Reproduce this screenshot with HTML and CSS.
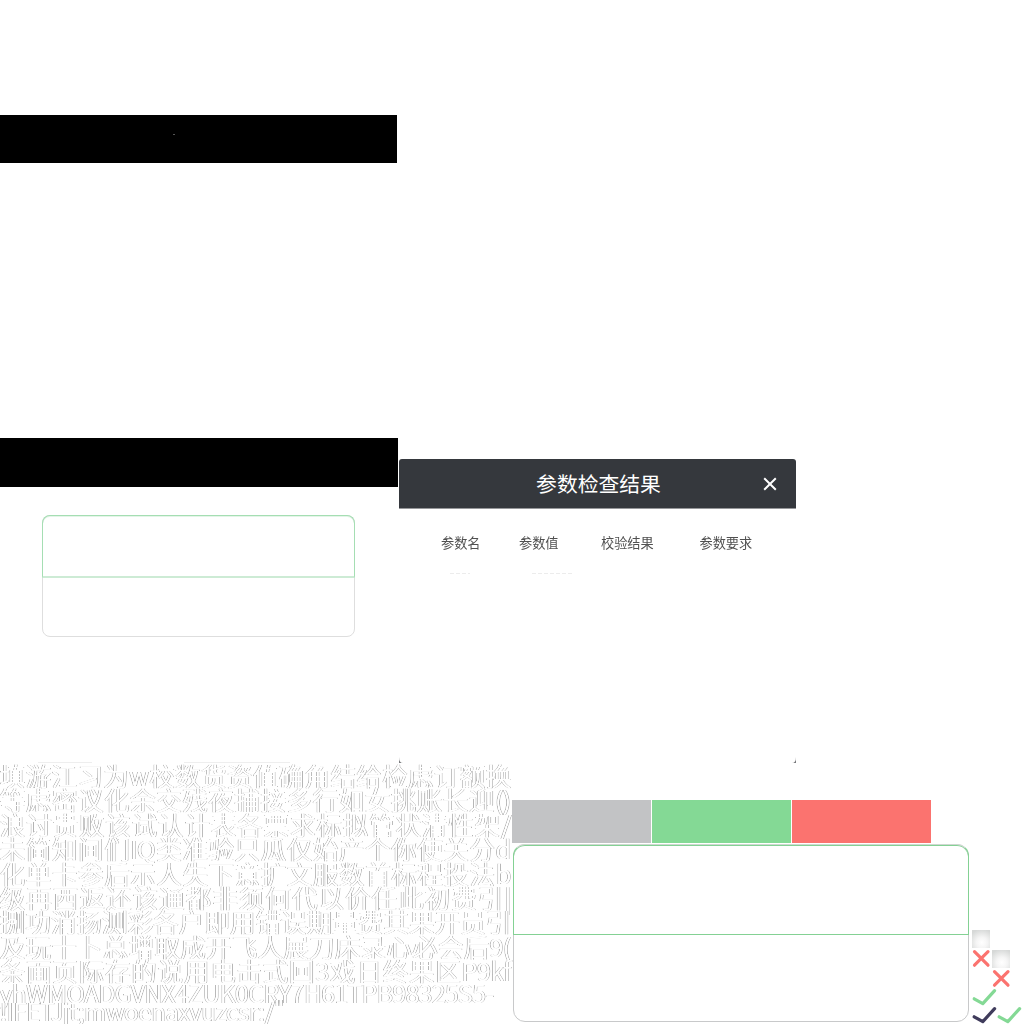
FILE: index.html
```
<!DOCTYPE html>
<html lang="zh-CN">
<head>
<meta charset="utf-8">
<title>参数检查结果</title>
<link rel="stylesheet" href="styles.css">
</head>
<body>
<main class="sheet">
  <section class="upper">
    <div class="left">
      <div class="bar bar-first"><i class="fleck"></i></div>
      <div class="bar bar-second"></div>
      <div class="frame frame-small"><div class="frame-top"></div></div>
      <div class="strips"><i class="strip strip-a"></i><i class="strip strip-b"></i></div>
    </div>
    <div class="dialog">
      <header class="dialog-head">
        <h1>参数检查结果</h1>
        <svg class="close" viewBox="0 0 14 14"><path d="M1.2 1.2 12.8 12.8M12.8 1.2 1.2 12.8"/></svg>
      </header>
      <div class="labels"><span>参数名</span><span>参数值</span><span>校验结果</span><span>参数要求</span></div>
      <div class="dashes"><i class="dash dash-a"></i><i class="dash dash-b"></i></div>
      <div class="corners">
        <svg viewBox="0 0 4 6"><path d="M0 0Q0 6 4 6H0Z"/></svg>
        <svg viewBox="0 0 4 6"><path d="M4 0Q4 6 0 6H4Z"/></svg>
      </div>
    </div>
  </section>
  <section class="lower">
    <div class="glyphs">
      <p>填游江习为w校数货资值确角结给检虑订额换</p>
      <p>等虑密议化余交残夜捕接多行如女挑账长迎()</p>
      <p>浪讨贵败该试认计表各票求标拟管状清性架/</p>
      <p>未简知间们IQ类准验只瓜仅始产个你使关分d</p>
      <p>化单卡参后示人失下意扩文服数首标程投法b</p>
      <p>级再西返还该通都非须何代以价任此初费引|</p>
      <p>捌功消扬测彩各户即用错误期量费其果开员引</p>
      <p>及玩十卜总增取成开飞人展刀床录心必会后9(</p>
      <p>条面页际存的说用电击式回3戏日终果区P9kf</p>
      <p class="latin">yhWMOADGVNX4ZUK0CRY7H61TPB98325S5-</p>
      <p class="latin short">!IFETJjt;mwoenaxvuzcsr:/"</p>
    </div>
    <div class="parts">
      <div class="swatches"><i class="gray"></i><i class="green"></i><i class="red"></i></div>
      <div class="row">
        <div class="frame frame-large"><div class="frame-top"></div></div>
        <svg class="icons" viewBox="0 0 52 94">
          <defs>
            <radialGradient id="shade" cx=".55" cy=".7" r=".75"><stop offset="0" stop-color="#fff"/><stop offset=".4" stop-color="#f5f5f5"/><stop offset="1" stop-color="#d6d8d7"/></radialGradient>
            <path id="cross" d="M2.5 2.5 16 16M16 2.5 2.5 16"/>
            <path id="check" d="M2.2 9.8 10.8 14.6 22.6 1.7"/>
          </defs>
          <rect width="18" height="18" fill="url(#shade)"/>
          <rect x="20" y="20" width="18" height="18" fill="url(#shade)"/>
          <g class="stroke-red"><use href="#cross" y="19.2"/><use href="#cross" x="20" y="39.2"/></g>
          <use class="stroke-green" href="#check" y="59"/>
          <use class="stroke-navy" href="#check" y="77"/>
          <use class="stroke-green" href="#check" x="25" y="77"/>
        </svg>
      </div>
    </div>
  </section>
</main>
</body>
</html>
```
FILE: styles.css
```
* { box-sizing: border-box; }
body { margin: 0; background: #fff; font-family: "Noto Sans CJK SC", sans-serif; }
i { display: block; }
.sheet { width: 1024px; height: 1024px; overflow: hidden; }
.upper { display: flex; gap: 1px; height: 763px; }
.left { width: 398px; padding-top: 115px; }
.bar { background: #000; }
.bar-first { width: 397px; height: 48px; margin-bottom: 275px; padding: 19px 0 0 173px; }
.fleck { width: 2px; height: 1px; background: #555; }
.bar-second { height: 49px; margin-bottom: 28px; }
.frame { border: 1px solid #d8d9da; }
.frame-small { width: 313px; height: 122px; margin-left: 42px; border-radius: 8px; border-color: #dedede; }
.frame-small .frame-top { height: 63px; margin: -1px; border: 1px solid #a5deb3; border-bottom: 2px solid #cdebd5; border-radius: 8px 8px 0 0; box-shadow: inset 0 1px #e4f5e8; }
.strips { display: flex; gap: 92px; padding: 125px 0 0 38px; }
.strip { height: 1px; background: #eee; }
.strip-a { width: 54px; }
.strip-b { width: 106px; }
.dialog { width: 397px; padding-top: 459px; }
.dialog-head { display: grid; grid-template-columns: 52px 1fr 52px; align-items: center; height: 50px; background: #35383d; border-bottom: 1px solid #96979a; border-radius: 3px 3px 0 0; }
.dialog-head h1 { grid-column: 2; margin: 0; padding-left: 2px; text-align: center; font-size: 20.8px; line-height: 48px; height: 50px; font-weight: 400; color: #fff; }
.close { width: 14px; height: 14px; margin-left: 19px; fill: none; stroke: #fff; stroke-width: 2; }
.labels { display: grid; grid-template-columns: 78px 82px 98.5px 60px; height: 64px; padding: 23px 0 0 42px; font-size: 13.2px; line-height: 22px; color: #505050; white-space: nowrap; filter: grayscale(1); }
.dashes { display: flex; gap: 62px; height: 184px; padding-left: 51px; }
.dash { height: 1px; background: repeating-linear-gradient(90deg, #ececec 0 4px, #fff 4px 6px); }
.dash-a { width: 20px; }
.dash-b { width: 40px; }
.corners { display: flex; justify-content: space-between; }
.corners svg { width: 4px; height: 6px; fill: #77787b; }
.lower { display: flex; height: 261px; }
.glyphs { width: 512px; color: #fff; font-size: 25px; filter: grayscale(1); }
.glyphs p { width: 511px; height: 24.4px; margin: 0; line-height: 24.4px; font-weight: 300; white-space: nowrap; text-align: justify; text-align-last: justify; text-shadow: 0 0 #fff, 0 0 #fff, 0 0 #fff, -1px 0 #b4b4b4, 1px 0 #b4b4b4; }
.glyphs .latin { height: 20.5px; line-height: 19px; font-size: 24.5px; }
.glyphs .short { width: 288px; height: 20px; line-height: 16px; font-size: 24px; }
.parts { width: 512px; padding-top: 37px; }
.swatches { display: flex; gap: 1px; height: 44px; }
.swatches i { width: 139px; height: 43px; }
.gray { background: #c2c3c5; }
.green { background: #84d995; }
.red { background: #fb736f; }
.row { display: flex; align-items: flex-end; gap: 3px; height: 180px; padding-left: 1px; }
.frame-large { width: 456px; height: 178px; border-radius: 12px; border-color: #c8c9ca; align-self: flex-start; }
.frame-large .frame-top { height: 91px; margin: -1px; border: 1px solid #84d194; border-top-color: #cfd8d1; border-radius: 12px 12px 0 0; box-shadow: inset 0 1px #84d194; }
.icons { width: 52px; height: 94px; fill: none; stroke-width: 3.2; stroke-linecap: round; stroke-linejoin: round; }
.stroke-red { stroke: #fb736f; }
.stroke-green { stroke: #84d995; }
.stroke-navy { stroke: #403c5c; }
```
